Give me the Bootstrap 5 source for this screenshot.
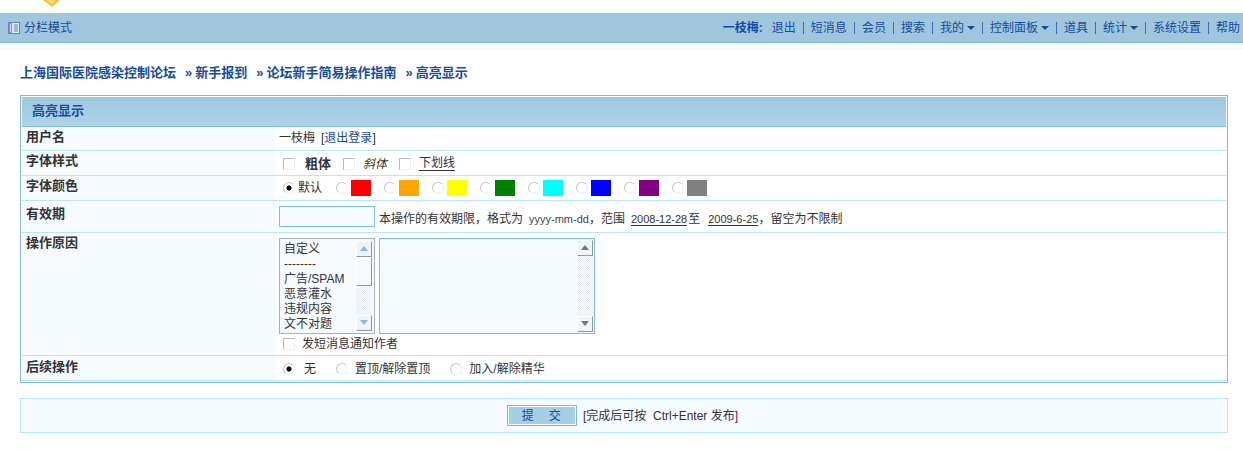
<!DOCTYPE html>
<html lang="zh-CN">
<head>
<meta charset="utf-8">
<title>高亮显示</title>
<link rel="stylesheet" href="https://cdn.jsdelivr.net/npm/bootstrap@5.3.0/dist/css/bootstrap.min.css">
<style>
html,body{height:450px;overflow:hidden;background:#fff}
body,button,input,textarea{font:12px/16px "Liberation Sans","Noto Sans CJK SC",sans-serif;color:#333}
a{color:#154ba0;text-decoration:none}
.logo-strip{height:13px;overflow:hidden;padding-left:43px}
.logo-strip svg{display:block}
.top-band{height:30px;background:#9fc6dd;border-bottom:1px solid #86b5d2;padding:0 3px 0 8px}
.top-band a{color:#154ba0}
.split-link{gap:4px}
.user-name{font-weight:700;color:#154ba0;margin-right:9px}
.nav-item-x{padding:0 7px;border-left:1px solid #3f6cb5;height:12px;line-height:12px}
.nav-item-x:first-of-type{border-left:0;padding-left:0}
.nav-item-x:last-of-type{padding-right:0}
.caret-x{display:inline-block;width:0;height:0;border:4px solid transparent;border-top:4px solid #154ba0;border-bottom:0;margin-left:3px;vertical-align:2px}
.band-shadow{height:6px;background:#f5fbff}
.crumbs{margin:16px 0 0 20px;height:16px;font-size:13px;font-weight:700;line-height:16px}
.crumbs i{font-style:normal;color:#154ba0;padding:0 3px 0 9px;font-weight:700}
.panel-box{margin:14px 15px 0 20px;width:1208px;height:288px;border:1px solid #86b5d2;padding:1px}
.panel-head{height:30px;background:linear-gradient(#9fc8e0,#add3e7);border-bottom:1px solid #7fbce5;padding-left:10px;line-height:28px;font-size:13px;font-weight:700;color:#154ba0}
.form-grid{display:grid;grid-template-columns:253px 1fr;grid-template-rows:24px 25px 25px 32px 123px 25px}
.form-grid>div{border-bottom:1px solid #b8e6f8}
.cell-l{background:#f5fbff;padding:2px 0 0 4px;font-size:13px;font-weight:700;color:#333}
.cell-l.pad-date{padding-top:5px}
.cell-l.pad-after{padding-top:3px}
.cell-r{padding:2px 0 0 4px}
.cell-r.no-top{padding-top:0}
.cell-r.user-cell{padding-top:3px}
.chk-x,.rad-x{appearance:none;-webkit-appearance:none;width:12px;height:12px;margin:0;flex:none;background:#fff}
.chk-x{border:1px solid #b9b9b9;border-right-color:#efefef;border-bottom-color:#efefef}
.rad-x{border-radius:50%;border:1px solid #c6c6c6;border-right-color:#efefef;border-bottom-color:#efefef}
.rad-x:checked{background:radial-gradient(circle,#000 0,#000 2.3px,#fff 2.8px)}
.swatch-x{display:block;width:20px;height:16px;margin:0 13px 0 3px}
.date-in{width:96px;height:21px;border:1px solid #7fbce5;background:#f5fbff;display:block;outline:0;padding:0}
.date-txt{padding-top:4px}
.u-dark{border-bottom:1px solid #333;line-height:13px;font-size:11px}
.code-x{color:#444;font-size:11px;margin-left:6px}
.date-a{margin:0 1px 0 6px}
.date-b{margin-left:8px}
.bold-opt{font-size:13px;margin:0 12px 0 10px}
.ital-opt{margin:0 12px 0 8px}
.under-opt{font-size:12px;margin-left:8px}
.def-opt{margin:0 14px 0 3px}
.logout-link{margin-left:6px}
.notify-row{margin-top:2px}
.notify-txt{margin-left:7px}
.none-opt{margin:0 20px 0 9px}
.top-opt{margin:0 20px 0 7px}
.add-opt{margin-left:7px}
.list-row{margin-top:3px}
.list-fake{width:96px;height:96px;border:1px solid #a0afd0;padding:2px;background:#f5fbff}
.list-items{padding:1px 0 0 2px;width:74px;line-height:15px;white-space:nowrap;overflow:hidden}
.area-fake{width:216px;height:96px;border:1px solid #7fbce5;margin-left:4px;background:#f5fbff;padding:1px}
.area-fake textarea{flex:1;border:0;background:transparent;resize:none;outline:0;padding:0;min-width:0}
.bar-x{width:16px;background:repeating-conic-gradient(#e8eef2 0 25%,#f8fbfd 0 50%) 0 0/2px 2px}
.btn-x{height:16px;background:#f0f4f6;border:1px solid;border-color:#fff #8a9aa6 #8a9aa6 #fff;flex:none}
.thumb-x{height:29px;background:#f5fbff;border:1px solid;border-color:#fff #8a9aa6 #8a9aa6 #fff;flex:none}
.bar-x svg{display:block;margin:4px auto 0}
.foot-box{margin:15px 0 0 20px;width:1208px;height:35px;border:1px solid #b5e6ff;background:#f5fbff;gap:4px}
.send-btn{width:70px;height:21px;border:1px solid #86b5d2;outline:1px solid #fff;outline-offset:-2px;background:#a6cee5;color:#154ba0;padding:0;line-height:18px;letter-spacing:1.5px}
.hint-x{width:160px;padding-left:2px;white-space:nowrap}
</style>
</head>
<body>
<div class="logo-strip">
<svg width="18" height="8" viewBox="0 0 18 8"><polygon points="0,0 17,0 9,7" fill="#f8c332"/><polygon points="4,0 13,0 9,4" fill="#fde17a"/></svg>
</div>
<div class="top-band d-flex align-items-center justify-content-between">
<a class="split-link d-flex align-items-center" href="#">
<svg width="12" height="12" viewBox="0 0 12 12"><rect x=".5" y=".5" width="11" height="11" fill="#dfe9f5" stroke="#5f86bd"/><rect x="1" y="1" width="3" height="10" fill="#7f9fd0"/><path d="M2 3h1M2 5h1M2 7h1M2 9h1" stroke="#fff"/><path d="M6 3h4M6 5h4M6 7h4M6 9h4" stroke="#5f86bd"/></svg>
<span>分栏模式</span></a>
<div class="d-flex align-items-center">
<span class="user-name">一枝梅:</span>
<a class="nav-item-x" href="#">退出</a>
<a class="nav-item-x" href="#">短消息</a>
<a class="nav-item-x" href="#">会员</a>
<a class="nav-item-x" href="#">搜索</a>
<a class="nav-item-x" href="#">我的<span class="caret-x"></span></a>
<a class="nav-item-x" href="#">控制面板<span class="caret-x"></span></a>
<a class="nav-item-x" href="#">道具</a>
<a class="nav-item-x" href="#">统计<span class="caret-x"></span></a>
<a class="nav-item-x" href="#">系统设置</a>
<a class="nav-item-x" href="#">帮助</a>
</div>
</div>
<div class="band-shadow"></div>
<div class="crumbs"><a href="#">上海国际医院感染控制论坛</a><i>»</i><a href="#">新手报到</a><i>»</i><a href="#">论坛新手简易操作指南</a><i>»</i><a href="#">高亮显示</a></div>
<div class="panel-box">
<div class="panel-head">高亮显示</div>
<div class="form-grid">
<div class="cell-l">用户名</div>
<div class="cell-r user-cell">一枝梅<span class="logout-link">[<a href="#">退出登录</a>]</span></div>
<div class="cell-l">字体样式</div>
<div class="cell-r d-flex align-items-center"><input type="checkbox" class="chk-x ms-1"><b class="bold-opt">粗体</b><input type="checkbox" class="chk-x"><em class="ital-opt">斜体</em><input type="checkbox" class="chk-x"><span class="u-dark under-opt">下划线</span></div>
<div class="cell-l">字体颜色</div>
<div class="cell-r no-top d-flex align-items-center"><input type="radio" name="c" class="rad-x ms-1" checked><span class="def-opt">默认</span>
<input type="radio" name="c" class="rad-x"><span class="swatch-x" style="background:#f00"></span>
<input type="radio" name="c" class="rad-x"><span class="swatch-x" style="background:#ffa500"></span>
<input type="radio" name="c" class="rad-x"><span class="swatch-x" style="background:#ff0"></span>
<input type="radio" name="c" class="rad-x"><span class="swatch-x" style="background:#008000"></span>
<input type="radio" name="c" class="rad-x"><span class="swatch-x" style="background:#0ff"></span>
<input type="radio" name="c" class="rad-x"><span class="swatch-x" style="background:#00f"></span>
<input type="radio" name="c" class="rad-x"><span class="swatch-x" style="background:#800080"></span>
<input type="radio" name="c" class="rad-x"><span class="swatch-x" style="background:#808080"></span></div>
<div class="cell-l pad-date">有效期</div>
<div class="cell-r no-top d-flex align-items-center"><input type="text" class="date-in me-1" aria-label="有效期"><span class="date-txt">本操作的有效期限，格式为<span class="code-x">yyyy-mm-dd</span>，范围<span class="u-dark date-a">2008-12-28</span>至<span class="u-dark date-b">2009-6-25</span>，留空为不限制</span></div>
<div class="cell-l">操作原因</div>
<div class="cell-r">
<div class="d-flex list-row">
<div class="list-fake d-flex">
<div class="list-items">自定义<br>--------<br>广告/SPAM<br>恶意灌水<br>违规内容<br>文不对题</div>
<div class="bar-x d-flex flex-column">
<div class="btn-x"><svg width="8" height="5" viewBox="0 0 8 5"><polygon points="4,0 8,5 0,5" fill="#7fbce5"/></svg></div>
<div class="thumb-x"></div>
<div class="flex-grow-1"></div>
<div class="btn-x"><svg width="8" height="5" viewBox="0 0 8 5"><polygon points="0,0 8,0 4,5" fill="#7fbce5"/></svg></div>
</div>
</div>
<div class="area-fake d-flex">
<textarea aria-label="操作原因"></textarea>
<div class="bar-x d-flex flex-column">
<div class="btn-x"><svg width="8" height="5" viewBox="0 0 8 5"><polygon points="4,0 8,5 0,5" fill="#777"/></svg></div>
<div class="flex-grow-1"></div>
<div class="btn-x"><svg width="8" height="5" viewBox="0 0 8 5"><polygon points="0,0 8,0 4,5" fill="#777"/></svg></div>
</div>
</div>
</div>
<div class="d-flex align-items-center notify-row"><input type="checkbox" class="chk-x ms-1"><span class="notify-txt">发短消息通知作者</span></div>
</div>
<div class="cell-l pad-after">后续操作</div>
<div class="cell-r d-flex align-items-center"><input type="radio" name="n" class="rad-x ms-1" checked><span class="none-opt">无</span><input type="radio" name="n" class="rad-x"><span class="top-opt">置顶/解除置顶</span><input type="radio" name="n" class="rad-x"><span class="add-opt">加入/解除精华</span></div>
</div>
</div>
<div class="foot-box d-flex align-items-center justify-content-center">
<button type="button" class="send-btn">提　交</button>
<span class="hint-x">[完成后可按 &nbsp;Ctrl+Enter 发布]</span>
</div>
</body>
</html>
